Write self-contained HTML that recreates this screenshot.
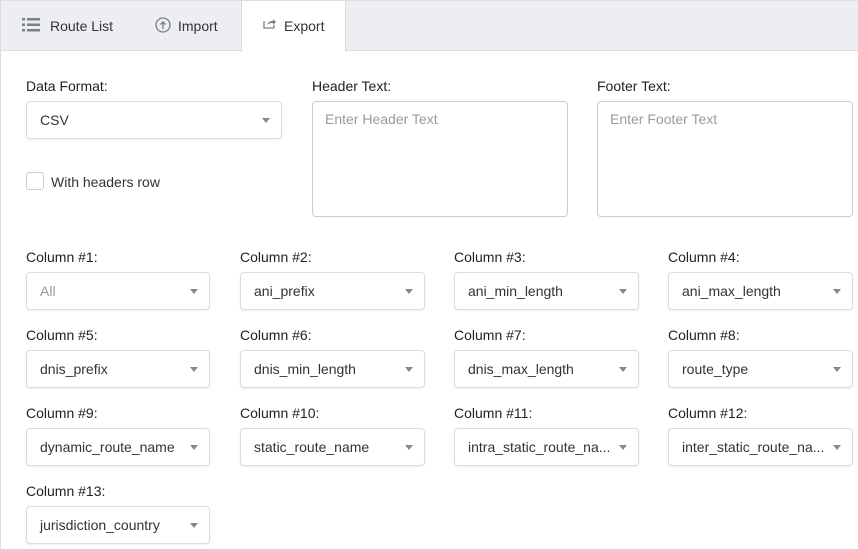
<!DOCTYPE html>
<html><head><meta charset="utf-8"><style>
*{box-sizing:border-box;margin:0;padding:0}
body{width:858px;height:549px;overflow:hidden;background:#fff;font-family:"Liberation Sans",sans-serif;color:#222;position:relative}
.tabs{position:absolute;left:0;top:0;width:858px;height:51px;background:#eceef2;border-top:1px solid #dcdde1;border-left:1px solid #dcdde1;border-bottom:1px solid #dcdde1}
.tab{position:absolute;top:0;height:50px;line-height:50px;font-size:14px;color:#333}
.tab.active{background:#fff;height:51px;border-left:1px solid #dcdde1;border-right:1px solid #dcdde1}
.lbl{position:absolute;font-size:14px;color:#222}
.sel{position:absolute;height:38px;border:1px solid #dcdcdc;border-radius:4px;box-shadow:0 1px 2px rgba(0,0,0,.07);font-size:14px;line-height:36px;padding-left:13px;color:#333;background:#fff}
.sel:after{content:"";position:absolute;right:11px;top:16px;border-left:4.5px solid transparent;border-right:4.5px solid transparent;border-top:5px solid #888}
.ta{position:absolute;top:101px;height:116px;width:256px;border:1px solid #ccc;border-radius:4px;font-size:14px;color:#9a9a9a;padding:9px 12px}
.frame{position:absolute;left:0;top:51px;width:1px;height:498px;background:#dcdde1}
</style></head><body>
<div class="tabs">
 <div class="tab" style="left:21px;width:113px">
  <svg width="18" height="14" style="position:absolute;left:0;top:17px" viewBox="0 0 18 14"><g fill="#7a7f8a"><rect x="0" y="0" width="3" height="2.5"/><rect x="5" y="0" width="13" height="2.5"/><rect x="0" y="5.5" width="3" height="2.5"/><rect x="5" y="5.5" width="13" height="2.5"/><rect x="0" y="11" width="3" height="2.5"/><rect x="5" y="11" width="13" height="2.5"/></g></svg>
  <span style="position:absolute;left:28px">Route List</span></div>
 <div class="tab" style="left:154px;width:86px">
  <svg width="16" height="16" style="position:absolute;left:0;top:16px" viewBox="0 0 16 16"><circle cx="8" cy="8" r="7" fill="none" stroke="#7a7f8a" stroke-width="1.3"/><path d="M8 12V5M5.5 7.5L8 5l2.5 2.5" fill="none" stroke="#7a7f8a" stroke-width="1.4"/></svg>
  <span style="position:absolute;left:23px">Import</span></div>
 <div class="tab active" style="left:240px;width:105px">
  <svg width="14" height="12" style="position:absolute;left:21px;top:16px" viewBox="0 0 14 12"><path d="M1 4v7h10V8" fill="none" stroke="#7a7f8a" stroke-width="1.3"/><path d="M4 8c1-3 3-4 6-4V2l3 3-3 3V6c-2 0-4 0-6 2z" fill="#7a7f8a"/></svg>
  <span style="position:absolute;left:42px">Export</span></div>
</div>
<div class="frame"></div>

<div class="lbl" style="left:26px;top:78px">Data Format:</div>
<div class="sel" style="left:26px;top:101px;width:256px">CSV</div>
<div style="position:absolute;left:26px;top:172px;width:18px;height:18px;border:1px solid #ccc;border-radius:3px"></div>
<div class="lbl" style="left:51px;top:174px;color:#333">With headers row</div>

<div class="lbl" style="left:312px;top:78px">Header Text:</div>
<div class="ta" style="left:312px">Enter Header Text</div>
<div class="lbl" style="left:597px;top:78px">Footer Text:</div>
<div class="ta" style="left:597px">Enter Footer Text</div>

<div class="lbl" style="left:26px;top:249px">Column #1:</div><div class="sel" style="left:26px;top:272px;width:184px;color:#999">All</div>
<div class="lbl" style="left:240px;top:249px">Column #2:</div><div class="sel" style="left:240px;top:272px;width:185px">ani_prefix</div>
<div class="lbl" style="left:454px;top:249px">Column #3:</div><div class="sel" style="left:454px;top:272px;width:185px">ani_min_length</div>
<div class="lbl" style="left:668px;top:249px">Column #4:</div><div class="sel" style="left:668px;top:272px;width:185px">ani_max_length</div>

<div class="lbl" style="left:26px;top:327px">Column #5:</div><div class="sel" style="left:26px;top:350px;width:184px">dnis_prefix</div>
<div class="lbl" style="left:240px;top:327px">Column #6:</div><div class="sel" style="left:240px;top:350px;width:185px">dnis_min_length</div>
<div class="lbl" style="left:454px;top:327px">Column #7:</div><div class="sel" style="left:454px;top:350px;width:185px">dnis_max_length</div>
<div class="lbl" style="left:668px;top:327px">Column #8:</div><div class="sel" style="left:668px;top:350px;width:185px">route_type</div>

<div class="lbl" style="left:26px;top:405px">Column #9:</div><div class="sel" style="left:26px;top:428px;width:184px">dynamic_route_name</div>
<div class="lbl" style="left:240px;top:405px">Column #10:</div><div class="sel" style="left:240px;top:428px;width:185px">static_route_name</div>
<div class="lbl" style="left:454px;top:405px">Column #11:</div><div class="sel" style="left:454px;top:428px;width:185px">intra_static_route_na...</div>
<div class="lbl" style="left:668px;top:405px">Column #12:</div><div class="sel" style="left:668px;top:428px;width:185px">inter_static_route_na...</div>

<div class="lbl" style="left:26px;top:483px">Column #13:</div><div class="sel" style="left:26px;top:506px;width:184px">jurisdiction_country</div>
</body></html>
